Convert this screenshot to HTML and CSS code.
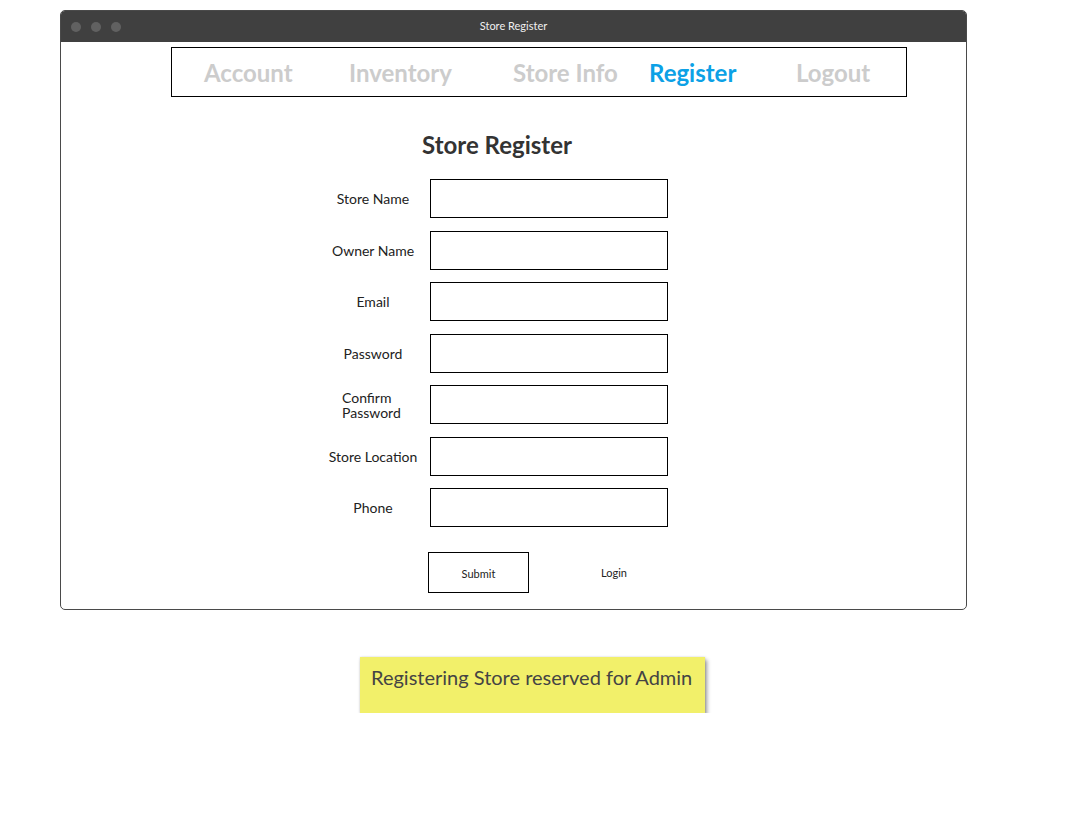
FILE: index.html
```html
<!DOCTYPE html>
<html lang="en">
<head>
<meta charset="utf-8">
<title>Store Register</title>
<link rel="stylesheet" href="styles.css">
</head>
<body>
<div class="canvas">
  <div class="window">
    <div class="titlebar">
      <div class="dots"><span class="dot"></span><span class="dot"></span><span class="dot"></span></div>
      <div class="title">Store Register</div>
    </div>
    <div class="content">
      <nav class="nav">
        <span class="nav-item">Account</span>
        <span class="nav-item">Inventory</span>
        <span class="nav-item">Store Info</span>
        <span class="nav-item active">Register</span>
        <span class="nav-item">Logout</span>
      </nav>
      <div class="form">
        <h1 class="heading">Store Register</h1>
        <div class="fields">
          <label class="label">Store Name</label><div class="input"></div>
          <label class="label">Owner Name</label><div class="input"></div>
          <label class="label">Email</label><div class="input"></div>
          <label class="label">Password</label><div class="input"></div>
          <label class="label label-multi">Confirm<br>Password</label><div class="input"></div>
          <label class="label">Store Location</label><div class="input"></div>
          <label class="label">Phone</label><div class="input"></div>
          <div class="actions">
            <div class="btn">Submit</div>
            <span class="link">Login</span>
          </div>
        </div>
      </div>
    </div>
  </div>
  <div class="note">Registering Store reserved for Admin</div>
</div>
</body>
</html>
```
FILE: styles.css
```css
* { box-sizing: border-box; }
html, body { margin: 0; padding: 0; background: #fff; }
body { font-family: Lato, "Open Sans", sans-serif; color: #222; }

.canvas { padding: 10px 0 0 60px; }

.window {
  width: 907px;
  height: 600px;
  border: 1px solid #4a4a4a;
  border-radius: 5px;
  overflow: hidden;
  background: #fff;
}

.titlebar {
  height: 31px;
  background: #404040;
  display: flex;
  align-items: center;
  position: relative;
}
.dots { display: flex; gap: 10px; padding-left: 10px; }
.dot { width: 10px; height: 10px; border-radius: 50%; background: #616161; }
.title {
  position: absolute;
  left: 0; right: 0; top: 0; bottom: 2px;
  display: flex; align-items: center; justify-content: center;
  color: #f0f0f0;
  font-size: 11px;
}

.content { padding-top: 5px; }

.nav {
  margin-left: 110px;
  width: 736px;
  height: 50px;
  border: 1px solid #000;
  display: grid;
  grid-template-columns: 145px 164px 136px 147px auto;
  align-items: center;
  padding-left: 32px;
}
.nav-item {
  font-weight: 700;
  font-size: 24px;
  color: #cccccc;
  white-space: nowrap;
}
.nav-item.active { color: #0ca1e6; }

.form { margin-left: 249px; width: 374px; }
.heading {
  margin: 33px 0 0 0;
  text-align: center;
  font-size: 24px;
  line-height: 30px;
  font-weight: 700;
  color: #333;
}

.fields {
  margin-top: 19px;
  display: grid;
  grid-template-columns: 120px 238px;
  row-gap: 12.5px;
  align-items: center;
}
.label {
  text-align: center;
  font-size: 14px;
  color: #222;
  line-height: 15px;
  padding-left: 6px;
}
.label-multi { text-align: left; padding-left: 32px; }
.input {
  height: 39px;
  border: 1px solid #000;
  background: #fff;
}

.actions {
  grid-column: 2;
  margin-top: 12.5px;
  margin-left: -2px;
  display: flex;
  align-items: center;
}
.btn {
  width: 101px;
  height: 41px;
  border: 1px solid #000;
  display: flex; align-items: center; justify-content: center;
  font-size: 11px;
  padding-top: 1px;
}
.link { margin-left: 72px; font-size: 11px; }

.note {
  margin: 47px 0 0 300px;
  width: 345px;
  height: 56px;
  background: #f2f06a;
  box-shadow: 0 0 2px rgba(0, 0, 0, 0.15), 2px 3px 4px rgba(0, 0, 0, 0.4);
  color: #444;
  font-size: 20px;
  padding: 7px 0 0 11px;
  line-height: 26px;
  white-space: nowrap;
}
```
